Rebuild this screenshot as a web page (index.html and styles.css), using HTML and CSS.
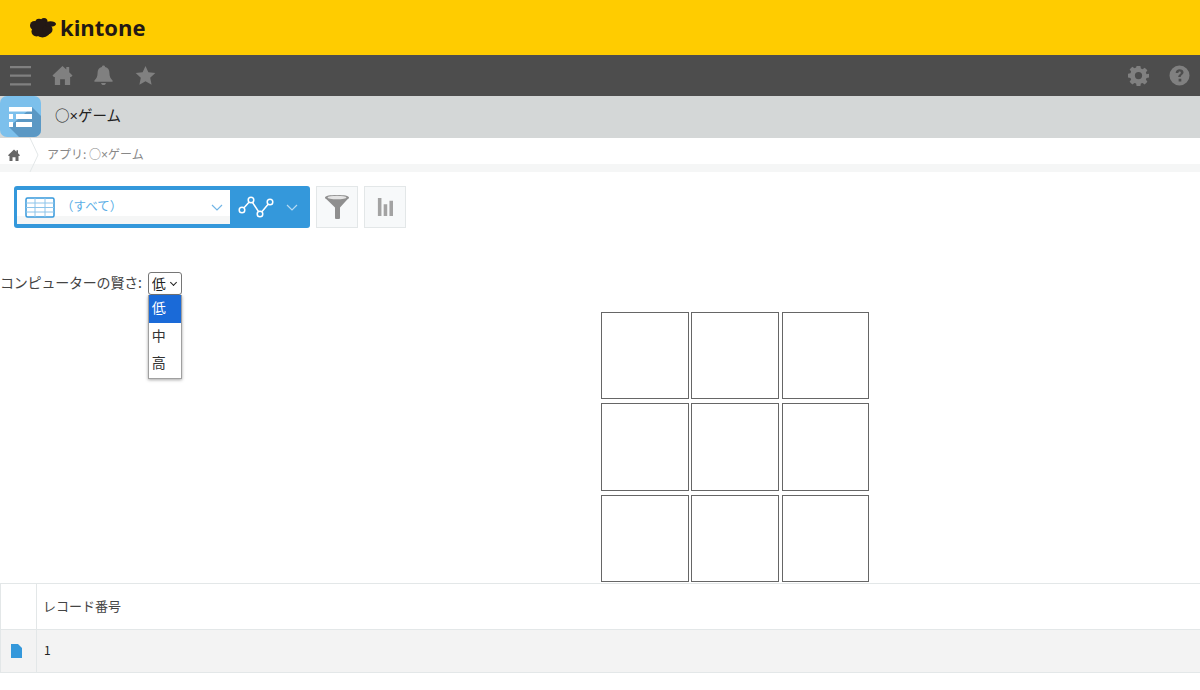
FILE: index.html
```html
<!DOCTYPE html>
<html lang="ja">
<head>
    <meta charset="UTF-8">
    <title>Oxゲーム - kintone</title>
    <link rel="stylesheet" href="styles.css">
</head>
<body>

    <!-- Logo bar -->
    <header class="header">
        <a class="logo" href="#">
            <svg class="logo-cloud" viewBox="0 0 26 20" width="26" height="20" fill="#231815">
                <circle cx="4.500" cy="7.500" r="4.500"/>
                <circle cx="6.500" cy="13.500" r="5"/>
                <circle cx="9" cy="4.500" r="3.800"/>
                <circle cx="14" cy="3.500" r="3.500"/>
                <circle cx="12.500" cy="11" r="8.500"/>
                <circle cx="17.500" cy="11.500" r="5"/>
                <ellipse cx="20.500" cy="6" rx="5.500" ry="2.800"/>
            </svg>
            <span>kintone</span>
        </a>
    </header>

    <!-- Global nav -->
    <nav class="global-nav">
        <div class="nav-group">
            <svg class="nav-icon" viewBox="0 0 22 22" width="21" height="21"><path d="M0 1h22v2.400H0zM0 10h22v2.400H0zM0 19h22v2.400H0z"/></svg>
            <svg class="nav-icon" viewBox="0 0 22 22" width="21" height="21"><path d="M11 1 15 4.800V2h3v5.600L21.500 11 20 12.500H19V21h-5.500v-6h-5v6H3v-8.500H2L.5 11z"/></svg>
            <svg class="nav-icon" viewBox="0 0 22 22" width="21" height="21"><path d="M11 .5c1 0 1.700.7 1.700 1.700 3 .7 4.500 3 4.500 6.300 0 4 1.300 6 3.300 7.800v1.200H1.500v-1.200c2-1.800 3.300-3.800 3.300-7.800 0-3.300 1.500-5.600 4.500-6.300C9.300 1.200 10 .5 11 .5zM8.500 18.800h5c0 1.300-1.100 2.200-2.500 2.200s-2.500-.9-2.500-2.200z"/></svg>
            <svg class="nav-icon" viewBox="0 0 22 22" width="21" height="21"><path d="M11 1l3 6.700 7.300.8-5.400 4.900 1.500 7.200L11 17l-6.400 3.600 1.500-7.200L.7 8.500 8 7.700z"/></svg>
        </div>
        <div class="nav-group nav-right">
            <svg class="nav-icon" viewBox="0 0 22 22" width="21" height="21"><path fill-rule="evenodd" d="M9 1h4l.5 2.700 1.700.7 2.300-1.600 2.800 2.800-1.600 2.300.7 1.700L22 9.100v4l-2.600.5-.7 1.700 1.600 2.300-2.800 2.800-2.300-1.600-1.700.7L13 22H9l-.5-2.500-1.700-.7-2.300 1.600-2.800-2.800 1.600-2.300-.7-1.700L0 13.100v-4l2.600-.5.700-1.700-1.600-2.300 2.800-2.800 2.300 1.600 1.700-.7zM11 7.300a3.800 3.800 0 1 0 0 7.600 3.800 3.800 0 0 0 0-7.600z"/></svg>
            <svg class="nav-icon" viewBox="0 0 22 22" width="21" height="21"><path fill-rule="evenodd" d="M11 .5a10.500 10.500 0 1 1 0 21 10.500 10.500 0 0 1 0-21zM7 8.500h2.800c0-1 .5-1.700 1.300-1.700.8 0 1.300.5 1.300 1.200 0 1.500-2.700 1.800-2.700 4.700h2.600c0-2 2.900-2.400 2.900-5 0-2-1.700-3.200-4-3.200-2.500 0-4.200 1.500-4.200 4zM10.100 14.500v2.800h2.800v-2.800z"/></svg>
        </div>
    </nav>

    <!-- App title -->
    <div class="app-bar">
        <div class="app-icon">
            <svg viewBox="0 0 41 41" width="41" height="41">
                <path d="M32 11 41 20V41H19L9 31z" fill="#5b98c4"/>
                <path d="M9 11h23v4.500H9zM9 18h4v5H9zM16 18h16v5H16zM9 26h4v5H9zM16 26h16v5H16z" fill="#fff"/>
            </svg>
        </div>
        <h1 class="app-title">○<span class="narrow">×</span>ゲーム</h1>
    </div>

    <!-- Breadcrumb -->
    <div class="breadcrumb">
        <a class="crumb-home" href="#">
            <svg viewBox="0 0 12 12" width="12" height="12"><path d="M6 .5 8.500 2.800V1.200h1.500v3L12 6.200l-.8.8h-.7v5H7.500V8.300h-3V12H1.500V7H.8L0 6.200z" fill="#666"/></svg>
        </a>
        <svg class="crumb-sep" viewBox="0 0 10 34" width="10" height="34"><path d="M1 0 9 17 1 34" fill="none" stroke="#e3e7e8"/></svg>
        <span class="crumb-text">アプリ: ○<span class="narrow">×</span>ゲーム</span>
    </div>

    <main class="main-content">
        <div class="toolbar">
            <div class="view-box">
                <div class="view-select">
                    <svg class="view-icon" viewBox="0 0 30 21" width="30" height="21">
                        <rect x="1" y="1" width="28" height="19" rx="1.500" fill="#fff" stroke="#3498db" stroke-width="1.500"/>
                        <path d="M1 6h28M1 10.500h28M1 15h28M10 1v19M20 1v19" stroke="#8cc4ea" fill="none"/>
                    </svg>
                    <span class="view-name">（すべて）</span>
                    <svg class="chevron" viewBox="0 0 12 7" width="12" height="7"><path d="M1 1l5 5 5-5" fill="none" stroke="#72b5e6" stroke-width="1.200"/></svg>
                </div>
                <div class="graph-select">
                    <svg viewBox="0 0 36 24" width="36" height="24">
                        <path d="M4 15 13 5l9 14 10-12" fill="none" stroke="#fff" stroke-width="1.500"/>
                        <circle cx="4" cy="15" r="2.800" fill="#3498db" stroke="#fff" stroke-width="1.500"/>
                        <circle cx="13" cy="5" r="2.800" fill="#3498db" stroke="#fff" stroke-width="1.500"/>
                        <circle cx="22" cy="19" r="2.800" fill="#3498db" stroke="#fff" stroke-width="1.500"/>
                        <circle cx="32" cy="7" r="2.800" fill="#3498db" stroke="#fff" stroke-width="1.500"/>
                    </svg>
                    <svg class="chevron" viewBox="0 0 12 7" width="12" height="7"><path d="M1 1l5 5 5-5" fill="none" stroke="#b5daf3" stroke-width="1.200"/></svg>
                </div>
            </div>
            <button class="tool-button">
                <svg viewBox="0 0 26 26" width="26" height="26">
                    <path d="M1 3.500C1 1.800 6 1 13 1s12 .8 12 2.500c0 .8-.6 1.300-1.500 1.800L16 13.500V24q0 1-1 1h-3q-1 0-1-1V13.500L2.500 5.300C1.600 4.800 1 4.300 1 3.500z" fill="#8f8f8f"/>
                    <ellipse cx="13" cy="3.500" rx="9.500" ry="1.700" fill="#e4e4e4"/>
                </svg>
            </button>
            <button class="tool-button">
                <svg viewBox="0 0 18 20" width="16" height="20"><path d="M1 0h4v20H1zM7.500 7h4v13h-4zM14 3h4v17h-4z" fill="#a3a3a3"/></svg>
            </button>
        </div>

        <!-- Customize view -->
        <div class="level-row">
            <label for="level">コンピューターの賢さ:</label>
            <span class="level-control">
                <select id="level" class="level-select">
                    <option>低</option>
                    <option>中</option>
                    <option>高</option>
                </select>
                <ul class="level-menu">
                    <li class="selected">低</li>
                    <li>中</li>
                    <li>高</li>
                </ul>
            </span>
        </div>

        <div class="board">
            <div class="cell"></div>
            <div class="cell"></div>
            <div class="cell"></div>
            <div class="cell"></div>
            <div class="cell"></div>
            <div class="cell"></div>
            <div class="cell"></div>
            <div class="cell"></div>
            <div class="cell"></div>
        </div>

        <table class="record-table">
            <thead>
                <tr>
                    <th class="col-icon"></th>
                    <th>レコード番号</th>
                </tr>
            </thead>
            <tbody>
                <tr>
                    <td class="col-icon">
                        <svg viewBox="0 0 11 14" width="11" height="14"><path d="M0 0h7l4 4v10H0z" fill="#3498db"/></svg>
                    </td>
                    <td>1</td>
                </tr>
            </tbody>
        </table>
    </main>

</body>
</html>
```

FILE: styles.css
```css
:root {
    --yellow: #ffcc00;
    --nav-bg: #4d4d4d;
    --nav-icon: #808080;
    --blue: #3498db;
    --border-color: #e3e7e8;
    --foot-color: #f5f6f6;
    --text-color: #333;
}
html, body { height: 100%; }
body {
    font-family: "Noto Sans CJK JP", "Noto Sans", sans-serif;
    color: var(--text-color);
    background: #fff;
    margin: 0;
    overflow: hidden;
}
.narrow { font-family: "Liberation Sans", sans-serif; }

/* Header */
.header {
    height: 55px;
    background-color: var(--yellow);
    display: flex;
    align-items: center;
    padding-left: 30px;
    box-sizing: border-box;
}
.logo { display: flex; align-items: center; gap: 4px; text-decoration: none; }
.logo-cloud { display: block; }
.logo span {
    font-family: "Open Sans", sans-serif;
    font-weight: 700;
    font-size: 22px;
    line-height: 1;
    padding-bottom: 2px;
    color: #231815;
}
.global-nav {
    height: 41px;
    background-color: var(--nav-bg);
    display: flex;
    justify-content: space-between;
    align-items: center;
    padding: 0 10px;
}
.nav-group { display: flex; gap: 20.500px; align-items: center; }
.nav-icon { fill: var(--nav-icon); display: block; }

/* App title */
.app-bar {
    height: 42px;
    background-color: #d4d7d7;
    display: flex;
    align-items: center;
}
.app-icon {
    width: 41px;
    height: 41px;
    align-self: flex-start;
    border-radius: 7px;
    background: #7cc0ec;
    overflow: hidden;
    flex-shrink: 0;
}
.app-icon svg { display: block; }
.app-title {
    margin: 0 0 0 14px;
    padding-bottom: 6px;
    font-size: 14.500px;
    font-weight: 400;
    color: #222;
}

/* Breadcrumb */
.breadcrumb {
    height: 34px;
    display: flex;
    align-items: center;
    background: linear-gradient(#fff 26px, var(--foot-color) 26px);
}
.crumb-home { width: 28px; padding-right: 1px; display: flex; justify-content: center; }
.crumb-home svg { display: block; }
.crumb-sep { display: block; }
.crumb-text { margin-left: 8px; padding-bottom: 3px; font-size: 12px; color: #888; }

/* Toolbar */
.toolbar { display: flex; gap: 6px; padding: 14px 0 0 14px; }
.view-box {
    width: 296px;
    height: 42px;
    box-sizing: border-box;
    background: var(--blue);
    border-radius: 3px;
    display: flex;
    padding: 4px 0;
}
.view-select {
    width: 213px;
    margin-left: 3px;
    background: linear-gradient(#fff 75%, var(--foot-color) 75%);
    display: flex;
    align-items: center;
    padding: 0 7px 0 8px;
    box-sizing: border-box;
}
.view-name { margin-left: 6px; padding-bottom: 4px; font-size: 12.500px; color: #5aaee6; flex: 1; }
.graph-select { flex: 1; display: flex; align-items: center; padding-left: 8px; gap: 12px; }
.tool-button {
    width: 42px;
    height: 42px;
    padding: 0;
    background: #f7f9fa;
    border: 1px solid var(--border-color);
    display: flex;
    align-items: center;
    justify-content: center;
}
.tool-button svg { display: block; }

/* Level select */
.level-row {
    margin-top: 44px;
    height: 23px;
    display: flex;
    align-items: center;
    font-size: 14px;
    color: #444;
}
.level-row label { margin-right: 6px; padding-bottom: 3px; letter-spacing: -0.200px; }
.level-control { position: relative; display: block; }
.level-control::after {
    content: '';
    position: absolute;
    top: 8px;
    left: 23px;
    width: 4px;
    height: 4px;
    border-right: 1.500px solid #222;
    border-bottom: 1.500px solid #222;
    transform: rotate(45deg);
}
.level-select {
    display: block;
    width: 34px;
    height: 23px;
    padding: 0 0 3px 3px;
    appearance: none;
    font-family: inherit;
    font-size: 14px;
    color: #222;
    background: #fff;
    border: 1px solid #767676;
    border-radius: 3px;
}
.level-menu {
    position: absolute;
    top: 23px;
    left: 0;
    width: 34px;
    margin: 0;
    padding: 0;
    box-sizing: border-box;
    list-style: none;
    background: #fff;
    border: 1px solid #a0a0a0;
    border-top: 0;
    box-shadow: 0 1px 3px rgba(0, 0, 0, 0.35);
}
.level-menu li { height: 27.500px; line-height: 25px; padding-left: 3px; color: #333; }
.level-menu li.selected { background: #1a6ad8; color: #fff; }

/* Board */
.board {
    display: grid;
    grid-template-columns: repeat(3, 87.600px);
    grid-template-rows: repeat(3, 87.300px);
    column-gap: 2.800px;
    row-gap: 4.200px;
    width: 268.500px;
    margin: 17px 0 1px 601px;
}
.cell { border: 1px solid #666; box-sizing: border-box; background: #fff; }

/* Record table */
.record-table { width: 100%; border-collapse: collapse; font-size: 13px; }
.record-table th, .record-table td {
    box-sizing: border-box;
    border: 1px solid var(--border-color);
    text-align: left;
    padding: 0 7px 3px;
    color: #444;
}
.record-table th:last-child, .record-table td:last-child { border-right: 0; }
.record-table th { height: 46px; font-weight: 400; padding-left: 6px; }
.record-table td { height: 43px; background: #f3f3f3; color: #222; font-size: 12px; }
.record-table .col-icon { width: 36px; padding: 0 7px; }
.record-table svg { display: block; margin: 0 0 0 3px; }
```
